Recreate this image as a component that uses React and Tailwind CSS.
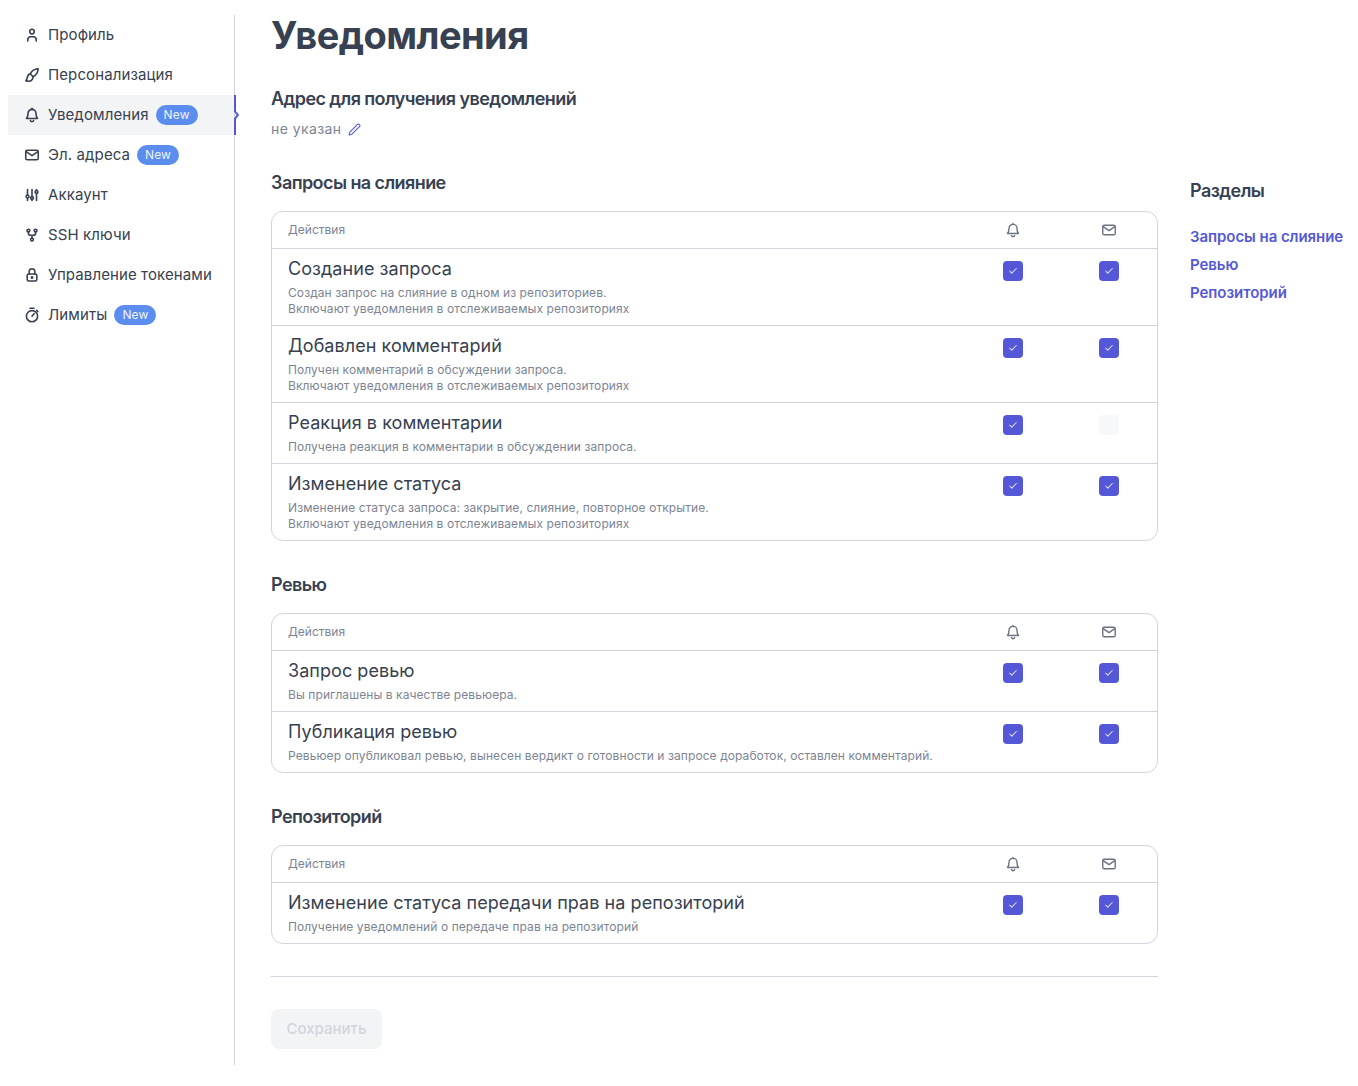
import React from "react";
import { Pen, Check } from "lucide-react";

function Svg({ size = 16, sw = 1.6, className = "", children }) {
  return (
    <svg width={size} height={size} viewBox="0 0 16 16" fill="none" stroke="currentColor" strokeWidth={sw} strokeLinecap="round" strokeLinejoin="round" className={"shrink-0 " + className}>
      {children}
    </svg>
  );
}

const UserI = (p) => (
  <Svg {...p}>
    <circle cx="8" cy="4.6" r="2.3" />
    <path d="M3.8 14v-1.2a3 3 0 0 1 3-3h2.4a3 3 0 0 1 3 3V14" />
  </Svg>
);
const BrushI = (p) => (
  <Svg {...p}>
    <path d="M14.2 1.8c-3.5.3-6.5 2.2-8 5l3 3c2.8-1.5 4.7-4.5 5-8z" />
    <path d="M6.3 6.9C4.3 7.2 3.7 8.6 3.4 10.2 3.2 11.6 2.6 13 1.8 13.8c2.4.7 5.6.5 6.7-1.7.5-.9.6-1.7.5-2.6" />
  </Svg>
);
const BellI = (p) => (
  <Svg {...p}>
    <path d="M8 2.4a4 4 0 0 0-4 4c0 2.6-.6 4-1.5 5.1h11C12.6 10.4 12 9 12 6.4a4 4 0 0 0-4-4z" />
    <path d="M8 1.4v1" />
    <path d="M6.4 13.6a1.7 1.7 0 0 0 3.2 0" />
  </Svg>
);
const MailI = (p) => (
  <Svg {...p}>
    <rect x="1.75" y="3.25" width="12.5" height="9.5" rx="1.6" />
    <path d="M2.2 4.6 8 8.6l5.8-4" />
  </Svg>
);
const SlidersI = (p) => (
  <Svg {...p}>
    <path d="M3.5 2.5v5.4M3.5 11v2.5M8 2.5v7M8 12.4v1.1M12.5 2.5v.9M12.5 6.4v7.1" />
    <circle cx="3.5" cy="9.4" r="1.4" />
    <circle cx="8" cy="11" r="1.4" />
    <circle cx="12.5" cy="4.9" r="1.4" />
  </Svg>
);
const ForkI = (p) => (
  <Svg {...p}>
    <circle cx="4.4" cy="3.6" r="1.4" />
    <circle cx="11.6" cy="3.6" r="1.4" />
    <circle cx="8" cy="12.6" r="1.4" />
    <path d="M4.4 5v1.2a2 2 0 0 0 2 2h3.2a2 2 0 0 0 2-2V5M8 8.2v3" />
  </Svg>
);
const LockI = (p) => (
  <Svg {...p}>
    <rect x="3.2" y="7" width="9.6" height="7" rx="1.5" />
    <path d="M5.2 7V4.6a2.8 2.8 0 0 1 5.6 0V7" />
    <circle cx="8" cy="10.5" r="0.7" fill="currentColor" />
  </Svg>
);
const TimerI = (p) => (
  <Svg {...p}>
    <circle cx="8" cy="9.2" r="5.6" />
    <path d="M6 1.3h4M8 9.2l2.2-2.6M12.6 3.4l1.2 1.2" />
  </Svg>
);

const nav = [
  { t: "Профиль", I: UserI },
  { t: "Персонализация", I: BrushI },
  { t: "Уведомления", I: BellI, badge: true, active: true },
  { t: "Эл. адреса", I: MailI, badge: true },
  { t: "Аккаунт", I: SlidersI },
  { t: "SSH ключи", I: ForkI },
  { t: "Управление токенами", I: LockI },
  { t: "Лимиты", I: TimerI, badge: true },
];

const sections = [
  {
    title: "Запросы на слияние",
    rows: [
      { t: "Создание запроса", d: ["Создан запрос на слияние в одном из репозиториев.", "Включают уведомления в отслеживаемых репозиториях"] },
      { t: "Добавлен комментарий", d: ["Получен комментарий в обсуждении запроса.", "Включают уведомления в отслеживаемых репозиториях"] },
      { t: "Реакция в комментарии", d: ["Получена реакция в комментарии в обсуждении запроса."], off: true },
      { t: "Изменение статуса", d: ["Изменение статуса запроса: закрытие, слияние, повторное открытие.", "Включают уведомления в отслеживаемых репозиториях"] },
    ],
  },
  {
    title: "Ревью",
    rows: [
      { t: "Запрос ревью", d: ["Вы приглашены в качестве ревьюера."] },
      { t: "Публикация ревью", d: ["Ревьюер опубликовал ревью, вынесен вердикт о готовности и запросе доработок, оставлен комментарий."] },
    ],
  },
  {
    title: "Репозиторий",
    rows: [
      { t: "Изменение статуса передачи прав на репозиторий", d: ["Получение уведомлений о передаче прав на репозиторий"] },
    ],
  },
];

function Box({ on }) {
  return on ? (
    <div className="w-5 h-5 rounded bg-[#5558d6] flex items-center justify-center">
      <Check size={10} strokeWidth={2.5} className="text-[#dfe0f8]" />
    </div>
  ) : (
    <div className="w-5 h-5 rounded bg-[#f7f8fa]" />
  );
}

function Section({ s }) {
  return (
    <section>
      <h2 className="text-lg leading-7 font-semibold tracking-[-0.032em] text-[#374151]">{s.title}</h2>
      <div className="mt-[14px] border border-[#d1d5db] rounded-xl">
        <div className="flex h-[37px] border-b border-[#d1d5db] items-center">
          <div className="flex-1 pl-4 text-xs text-[#7c8494]">Действия</div>
          <div className="w-24 flex justify-center"><BellI size={16} sw={1.4} className="text-[#6b7280]" /></div>
          <div className="w-24 flex justify-center"><MailI size={16} sw={1.4} className="text-[#6b7280]" /></div>
        </div>
        {s.rows.map((r, i) => (
          <div key={r.t} className={"flex pt-[6px] pb-2 " + (i < s.rows.length - 1 ? "border-b border-[#d1d5db]" : "")}>
            <div className="flex-1 pl-4">
              <div className="text-lg leading-7 text-[#374151] tracking-[0.003em]">{r.t}</div>
              <div className="mt-[2px] text-xs leading-4 text-[#7c8494] tracking-[0.007em]">
                {r.d.map((x) => <div key={x}>{x}</div>)}
              </div>
            </div>
            <div className="w-24 flex justify-center pt-[6px]"><Box on /></div>
            <div className="w-24 flex justify-center pt-[6px]"><Box on={!r.off} /></div>
          </div>
        ))}
      </div>
    </section>
  );
}

export default function App() {
  return (
    <div className="flex min-h-[1086px] bg-white pt-[15px] pb-[21px] pl-2 font-['Inter',sans-serif] text-[#374151]">
      <aside className="w-[227px] shrink-0 border-r border-[#d1d5db]">
        {nav.map(({ t, I, badge, active }) => (
          <div key={t} className={"relative flex items-center h-10 pl-4 text-[15px] tracking-[0.007em] " + (active ? "bg-[#f3f4f6]" : "")}>
            <I size={16} className="text-[#374151]" />
            <span className="ml-2">{t}</span>
            {badge && <span className="ml-[7px] h-5 px-2 rounded-full bg-[#5b8def] text-[#eef3fe] text-xs leading-5">New</span>}
            {active && (
              <svg className="absolute right-[-5px] top-0" width="5" height="40" viewBox="0 0 5 40" fill="none">
                <path d="M1 0V16.5L4 20L1 23.5V40" stroke="#5558d6" strokeWidth="2" />
              </svg>
            )}
          </div>
        ))}
      </aside>
      <main className="w-[887px] shrink-0 ml-9">
        <h1 className="text-[38px] leading-10 font-bold tracking-[-0.015em] text-[#374151]">Уведомления</h1>
        <h3 className="mt-[30px] text-lg leading-7 font-semibold tracking-[-0.032em]">Адрес для получения уведомлений</h3>
        <div className="mt-1 flex items-center gap-[6px] h-6 text-sm tracking-[0.03em] text-[#7c8494]">
          не указан <Pen size={13} strokeWidth={2} className="text-[#5558d6]" />
        </div>
        <div className="mt-[28px] flex flex-col gap-[30px]">
          {sections.map((s) => <Section key={s.title} s={s} />)}
        </div>
        <div className="mt-8 border-t border-[#d1d5db] pt-8">
          <div className="w-[111px] h-10 rounded-lg bg-[#f3f4f6] text-[#d1d5db] text-[15px] font-medium flex items-center justify-center">Сохранить</div>
        </div>
      </main>
      <nav className="ml-8 pt-[162px]">
        <div className="text-lg leading-7 font-semibold tracking-[-0.03em]">Разделы</div>
        <div className="mt-[18px] flex flex-col text-[15px] leading-7 font-semibold tracking-[-0.004em] text-[#5558d6]">
          <span>Запросы на слияние</span>
          <span>Ревью</span>
          <span>Репозиторий</span>
        </div>
      </nav>
    </div>
  );
}
